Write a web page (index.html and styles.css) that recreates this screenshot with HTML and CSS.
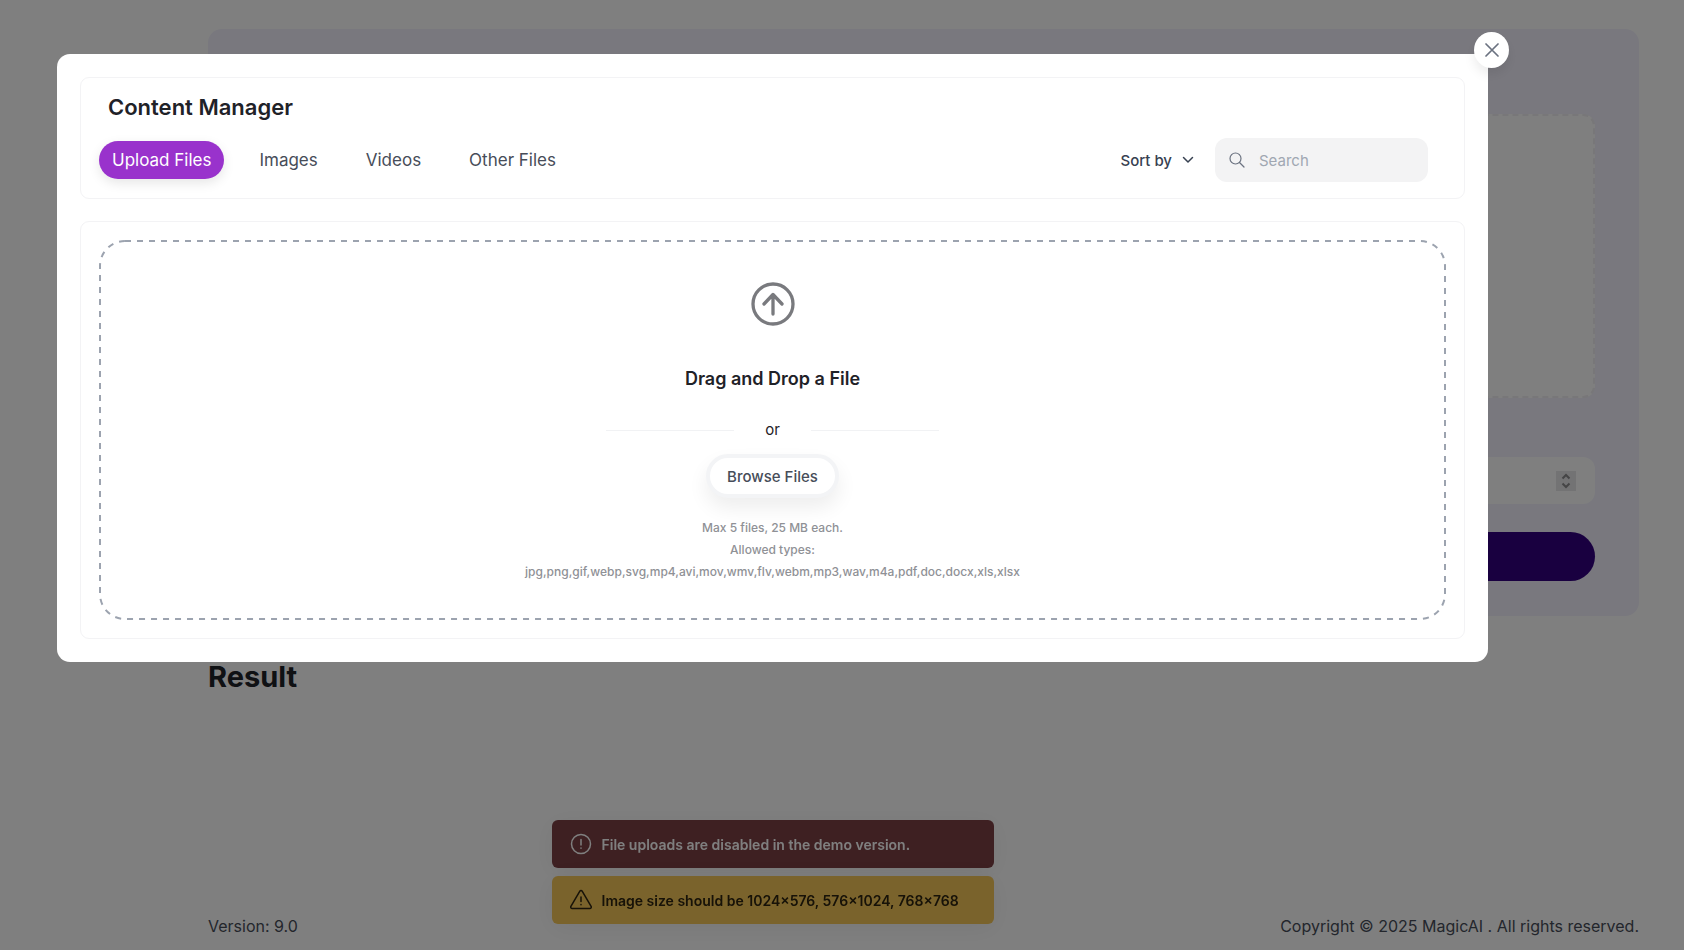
FILE: index.html
```
<!DOCTYPE html>
<html lang="en">
<head>
    <meta charset="UTF-8">
    <meta name="viewport" content="width=device-width, initial-scale=1.0">
    <title>MagicAI - Content Manager</title>
    <link rel="stylesheet" href="styles.css">
</head>
<body>
    <div class="page">
        <main>
            <form class="generator">
                <div class="drop-preview"></div>
                <div class="number-field">
                    <input type="text" inputmode="numeric" aria-label="Number of images">
                    <button type="button" class="stepper" aria-label="Change value">
                        <svg width="10" height="16" viewBox="0 0 10 16" fill="none" stroke="currentColor" stroke-width="2"><path d="M1.500 5.500 5 2l3.500 3.500M1.500 10.500 5 14l3.500-3.500"/></svg>
                    </button>
                </div>
                <button type="button" class="generate" aria-label="Generate"></button>
            </form>
            <h2 class="result-title">Result</h2>
        </main>
        <footer>
            <p>Version: 9.0</p>
            <p>Copyright © 2025 MagicAI . All rights reserved.</p>
        </footer>
    </div>

    <!-- Toasts -->
    <div class="toasts">
        <div class="toast toast-error" role="alert">
            <svg width="22" height="22" viewBox="0 0 22 22" fill="none" stroke="currentColor" stroke-width="1.5" stroke-linecap="round"><circle cx="11" cy="11" r="9.500"/><path d="M11 6.500v5.500M11 15v.2"/></svg>
            <span>File uploads are disabled in the demo version.</span>
        </div>
        <div class="toast toast-warning" role="alert">
            <svg width="22" height="22" viewBox="0 0 22 22" fill="none" stroke="currentColor" stroke-width="1.500" stroke-linecap="round" stroke-linejoin="round"><path d="M9.700 2.300.9 17.300A1.500 1.500 0 0 0 2.200 19.500h17.600a1.500 1.500 0 0 0 1.300-2.200L12.300 2.300a1.500 1.500 0 0 0-2.600 0zM11 8v4.500M11 15.500v.2"/></svg>
            <span>Image size should be 1024×576, 576×1024, 768×768</span>
        </div>
    </div>

    <!-- Content manager modal -->
    <div class="overlay">
        <div class="modal" role="dialog" aria-labelledby="modal-title">
            <button type="button" class="close" aria-label="Close">
                <svg width="14" height="14" viewBox="0 0 14 14" fill="none" stroke="currentColor" stroke-width="1.700" stroke-linecap="round"><path d="M1 1l12 12M13 1 1 13"/></svg>
            </button>

            <div class="panel panel-head">
                <h3 id="modal-title">Content Manager</h3>
                <div class="toolbar">
                    <div class="tabs">
                        <button type="button" class="tab active">Upload Files</button>
                        <button type="button" class="tab">Images</button>
                        <button type="button" class="tab">Videos</button>
                        <button type="button" class="tab">Other Files</button>
                    </div>
                    <div class="filters">
                        <button type="button" class="sort">
                            Sort by
                            <svg width="12" height="8" viewBox="0 0 12 8" fill="none" stroke="currentColor" stroke-width="1.500" stroke-linecap="round" stroke-linejoin="round"><path d="M1.500 1.500 6 6l4.500-4.500"/></svg>
                        </button>
                        <label class="search">
                            <svg width="16" height="16" viewBox="0 0 16 16" fill="none" stroke="currentColor" stroke-width="1.200" stroke-linecap="round"><circle cx="6.500" cy="6.500" r="5.500"/><path d="M10.500 10.500 15 15"/></svg>
                            <input type="search" placeholder="Search" aria-label="Search">
                        </label>
                    </div>
                </div>
            </div>

            <div class="panel panel-body">
                <div class="dropzone">
                    <svg class="dropzone-border" aria-hidden="true"><rect x="1" y="1" rx="25"/></svg>
                    <svg class="upload-icon" width="44" height="44" viewBox="0 0 44 44" fill="none" stroke="currentColor" stroke-width="3.300" stroke-linecap="round" stroke-linejoin="round"><circle cx="22" cy="22" r="20"/><path d="M22 32V13M13 22l9-9.500 9 9.500"/></svg>
                    <h4>Drag and Drop a File</h4>
                    <div class="divider"><span>or</span></div>
                    <button type="button" class="browse">Browse Files</button>
                    <p class="hint">Max 5 files, 25 MB each.<br>Allowed types:<br>jpg,png,gif,webp,svg,mp4,avi,mov,wmv,flv,webm,mp3,wav,m4a,pdf,doc,docx,xls,xlsx</p>
                </div>
            </div>
        </div>
    </div>
</body>
</html>
```
FILE: styles.css
```
* {
    box-sizing: border-box;
}

body {
    margin: 0;
    font-family: Inter, "Liberation Sans", sans-serif;
    font-size: 16px;
    color: #1f2228;
    background-color: #ffffff;
}

h2, h3, h4, p {
    margin: 0;
}

button, input {
    font-family: inherit;
    color: inherit;
    border: none;
    background: none;
    padding: 0;
}

button {
    cursor: pointer;
}

svg {
    display: block;
    flex-shrink: 0;
}

/* Page behind the modal */
.page {
    display: flex;
    flex-direction: column;
    justify-content: space-between;
    min-height: 100vh;
    padding: 29px 45px 14px 208px;
}

.generator {
    display: flex;
    flex-direction: column;
    padding: 85px 44px 35px;
    background-color: #f2f1fc;
    border-radius: 14px;
}

.drop-preview {
    height: 284px;
    background-color: #ffffff;
    border: 2px dashed #f0eff2;
    border-radius: 12px;
}

.number-field {
    display: flex;
    align-items: center;
    height: 47px;
    margin-top: 59px;
    padding-right: 19px;
    background-color: #ffffff;
    border-radius: 12px;
}

.number-field input {
    flex: 1;
    height: 100%;
    padding: 0 16px;
}

.stepper {
    display: flex;
    align-items: center;
    justify-content: center;
    width: 20px;
    height: 20px;
    background-color: #e6e6e8;
    color: #8a8a8c;
}

.generate {
    height: 49px;
    margin-top: 28px;
    background-color: #330080;
    border-radius: 25px;
}

.result-title {
    margin-top: 44px;
    font-size: 29px;
    line-height: 34px;
    font-weight: 700;
}

footer {
    display: flex;
    justify-content: space-between;
    font-size: 16px;
    line-height: 20px;
    color: #474d59;
}

/* Toasts */
.toasts {
    position: fixed;
    left: 57px;
    right: 196px;
    bottom: 26px;
    display: flex;
    flex-direction: column;
    align-items: center;
    gap: 8px;
}

.toast {
    display: flex;
    align-items: center;
    gap: 10px;
    width: 442px;
    height: 48px;
    padding: 0 18px;
    border-radius: 6px;
    font-size: 14px;
    font-weight: 600;
    box-shadow: 0 4px 24px rgba(0, 0, 0, 0.06);
}

.toast-error {
    background-color: #7c4044;
    color: #ffffff;
}

.toast-warning {
    background-color: #f4c658;
    color: #2e2510;
}

/* Modal */
.overlay {
    position: fixed;
    inset: 0;
    padding: 54px 196px 0 57px;
    background-color: rgba(0, 0, 0, 0.5);
}

.modal {
    position: relative;
    display: flex;
    flex-direction: column;
    gap: 22px;
    padding: 23px;
    background-color: #ffffff;
    border-radius: 13px;
}

.close {
    position: absolute;
    top: -22px;
    right: -21px;
    display: flex;
    align-items: center;
    justify-content: center;
    width: 35px;
    height: 36px;
    border-radius: 50%;
    background-color: #ffffff;
    color: #6b7280;
    box-shadow: 0 6px 12px rgba(0, 0, 0, 0.08);
}

.panel {
    border: 1px solid #f3f3f5;
    border-radius: 9px;
}

.panel-head {
    padding: 14px 36px 16px 18px;
}

.panel-head h3 {
    padding-left: 9px;
    font-size: 22px;
    line-height: 30px;
    font-weight: 600;
}

.toolbar {
    display: flex;
    align-items: center;
    justify-content: space-between;
    margin-top: 16px;
}

.tabs {
    display: flex;
    gap: 22px;
}

.tab {
    height: 38px;
    padding: 0 13px;
    border-radius: 19px;
    font-size: 17px;
    color: #474d59;
}

.tab.active {
    background-color: #9932cc;
    color: #ffffff;
    box-shadow: 0 4px 12px rgba(0, 0, 0, 0.1);
}

.filters {
    display: flex;
    align-items: center;
    gap: 21px;
}

.sort {
    display: flex;
    align-items: center;
    gap: 10px;
    font-size: 15px;
    font-weight: 500;
    color: #374151;
}

.search {
    display: flex;
    align-items: center;
    gap: 14px;
    width: 213px;
    height: 44px;
    padding: 0 14px;
    border-radius: 12px;
    background-color: #f3f3f4;
    color: #6b7280;
}

.search input {
    width: 100%;
    font-size: 15px;
    outline: none;
}

.search input::placeholder {
    color: #a0a7b2;
}

.panel-body {
    padding: 18px;
}

.dropzone {
    position: relative;
    display: flex;
    flex-direction: column;
    align-items: center;
    padding: 42px 22px 37px;
    text-align: center;
}

.dropzone-border {
    position: absolute;
    inset: 0;
    width: 100%;
    height: 100%;
    pointer-events: none;
}

.dropzone-border rect {
    width: calc(100% - 2px);
    height: calc(100% - 2px);
    fill: none;
    stroke: #9ca3af;
    stroke-width: 2px;
    stroke-dasharray: 6 6;
}

.upload-icon {
    color: #797a7e;
}

.dropzone h4 {
    margin-top: 41px;
    font-size: 18px;
    line-height: 24px;
    font-weight: 600;
}

.divider {
    display: flex;
    align-items: center;
    gap: 31px;
    width: 333px;
    margin-top: 29px;
    font-size: 15px;
    line-height: 20px;
}

.divider::before,
.divider::after {
    content: "";
    flex: 1;
    height: 1px;
    background-color: #f1f2f4;
}

.browse {
    height: 44px;
    margin-top: 14px;
    padding: 0 17px;
    border: 4px solid #f3f4f6;
    border-radius: 22px;
    background-color: #ffffff;
    font-size: 15px;
    font-weight: 500;
    color: #474d59;
    box-shadow: 0 10px 20px rgba(0, 0, 0, 0.07);
}

.hint {
    margin-top: 19px;
    font-size: 12px;
    line-height: 22px;
    font-weight: 500;
    color: #8f9196;
}
```
